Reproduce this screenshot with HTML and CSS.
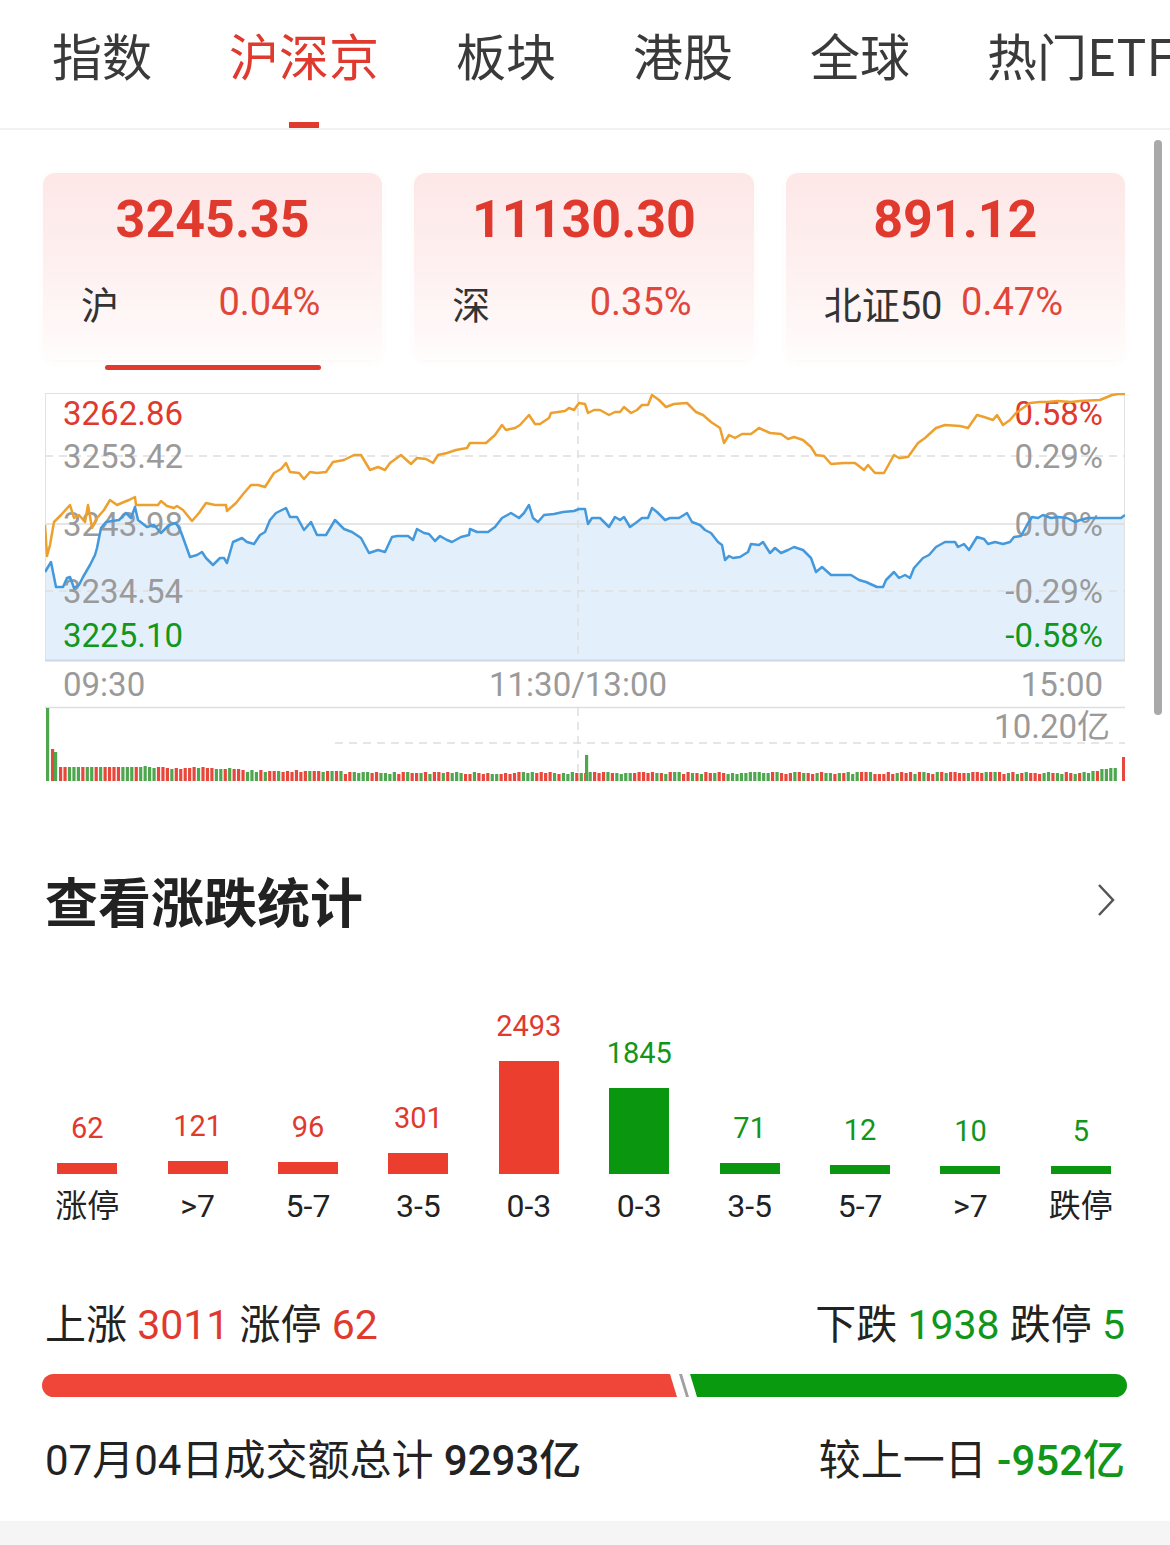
FILE: index.html
```html
<!DOCTYPE html>
<html>
  <head>
    <meta charset="utf-8">
    <title>行情</title>
    <link rel="stylesheet" href="styles.css">
  </head>
  <body>
    <nav class="tabs">
      <span class="tab">指数</span>
      <span class="tab active">沪深京</span>
      <span class="tab">板块</span>
      <span class="tab">港股</span>
      <span class="tab">全球</span>
      <span class="tab">热门ETF</span>
    </nav>

    <section class="market">
      <div class="quotes">
        <div class="quote">
          <div class="card">
            <div class="price">3245.35</div>
            <div class="row"><span class="name">沪</span><span class="pct">0.04%</span></div>
          </div>
          <div class="mark"></div>
        </div>
        <div class="quote">
          <div class="card">
            <div class="price">11130.30</div>
            <div class="row"><span class="name">深</span><span class="pct">0.35%</span></div>
          </div>
        </div>
        <div class="quote">
          <div class="card">
            <div class="price">891.12</div>
            <div class="row"><span class="name">北证50</span><span class="pct">0.47%</span></div>
          </div>
        </div>
      </div>

      <svg class="chart" width="1080" height="389" viewBox="45 393 1080 389">
        <polygon class="area" points="45,572 51,562 56,587 63,587 67,578 70,577 74,588 79,585 83,577 90,565 95,555 97,548 101,528 106,522 119,520 126,513 131,518 135,507 138,520 147,527 154,525 161,533 169,525 176,523 181,532 190,557 197,555 202,552 206,558 213,565 220,558 224,558 227,563 233,542 242,538 247,542 254,544 260,535 265,532 270,520 276,513 286,508 290,517 297,517 304,530 311,522 317,535 326,535 335,520 344,529 352,532 361,538 369,553 378,550 385,552 392,537 397,536 408,536 413,540 417,529 424,533 429,534 435,541 440,536 447,540 452,542 461,537 469,535 470,529 477,532 488,532 495,527 502,518 511,513 519,518 524,513 529,505 533,518 538,522 544,515 554,514 563,512 574,511 579,509 585,509 588,524 592,518 600,518 609,527 615,517 620,520 624,517 630,527 637,522 642,518 648,518 652,508 657,512 665,520 670,518 679,518 687,513 692,522 700,525 705,530 711,533 718,542 722,545 725,560 729,556 733,558 740,557 748,552 751,544 759,545 763,542 770,553 775,548 781,553 788,550 794,547 803,550 811,558 816,572 822,567 831,575 851,575 859,580 866,582 877,587 883,587 886,580 894,572 899,578 905,575 910,578 914,568 923,558 929,555 936,547 945,542 955,542 958,547 964,544 969,550 977,537 984,539 988,544 995,542 1003,544 1010,542 1014,537 1021,536 1027,525 1032,517 1038,518 1043,515 1051,518 1058,517 1067,518 1075,522 1080,520 1088,518 1110,518 1121,518 1125,515 1125,661 45,661"/>
        <rect class="frame" x="45.5" y="393.5" width="1079" height="267"/>
        <line class="grid dash" x1="45" y1="456" x2="1125" y2="456"/>
        <line class="grid" x1="45" y1="524" x2="1125" y2="524"/>
        <line class="grid dash" x1="45" y1="591" x2="1125" y2="591"/>
        <line class="grid dash" x1="578" y1="394" x2="578" y2="660"/>
        <line class="base" x1="45" y1="660.5" x2="1125" y2="660.5"/>

        <text class="ax up" x="63" y="413">3262.86</text>
        <text class="ax" x="63" y="456">3253.42</text>
        <text class="ax" x="63" y="524">3243.98</text>
        <text class="ax" x="63" y="591">3234.54</text>
        <text class="ax down" x="63" y="635">3225.10</text>
        <text class="ax up end" x="1103" y="413">0.58%</text>
        <text class="ax end" x="1103" y="456">0.29%</text>
        <text class="ax end" x="1103" y="524">0.00%</text>
        <text class="ax end" x="1103" y="591">-0.29%</text>
        <text class="ax down end" x="1103" y="635">-0.58%</text>

        <polyline class="line-sh" points="45,525 47,556 50,545 54,522 61,515 70,505 74,518 79,515 85,522 88,505 92,528 97,518 104,510 110,500 117,505 124,502 129,500 135,497 136,505 158,505 161,501 167,506 174,508 177,506 183,510 192,521 199,513 206,503 215,505 226,505 227,511 236,503 244,493 251,485 258,485 265,487 274,473 281,469 286,463 290,472 299,473 304,479 310,472 317,473 326,472 333,462 344,460 354,455 361,455 370,470 378,467 385,470 390,463 401,455 411,464 417,458 426,459 433,463 438,455 447,453 456,450 467,448 470,443 486,443 495,435 502,425 506,430 515,428 520,425 529,415 535,424 540,424 549,418 551,413 565,411 569,408 574,410 579,403 585,404 588,413 594,410 600,410 609,415 615,412 620,412 624,407 631,413 637,410 642,405 648,405 652,395 659,400 666,407 674,404 687,403 696,412 703,415 711,422 720,428 724,443 729,435 735,438 742,434 751,434 759,428 770,433 781,434 788,439 794,437 803,440 811,447 816,455 824,456 831,464 844,463 855,463 864,470 868,465 875,473 884,473 894,455 899,458 908,457 918,443 925,438 936,428 945,425 960,426 968,428 977,415 984,417 993,420 997,415 1003,425 1010,420 1016,413 1030,403 1040,402 1047,402 1058,401 1071,402 1080,401 1100,400 1112,395 1119,394 1125,394"/>
        <polyline class="line-idx" points="45,572 51,562 56,587 63,587 67,578 70,577 74,588 79,585 83,577 90,565 95,555 97,548 101,528 106,522 119,520 126,513 131,518 135,507 138,520 147,527 154,525 161,533 169,525 176,523 181,532 190,557 197,555 202,552 206,558 213,565 220,558 224,558 227,563 233,542 242,538 247,542 254,544 260,535 265,532 270,520 276,513 286,508 290,517 297,517 304,530 311,522 317,535 326,535 335,520 344,529 352,532 361,538 369,553 378,550 385,552 392,537 397,536 408,536 413,540 417,529 424,533 429,534 435,541 440,536 447,540 452,542 461,537 469,535 470,529 477,532 488,532 495,527 502,518 511,513 519,518 524,513 529,505 533,518 538,522 544,515 554,514 563,512 574,511 579,509 585,509 588,524 592,518 600,518 609,527 615,517 620,520 624,517 630,527 637,522 642,518 648,518 652,508 657,512 665,520 670,518 679,518 687,513 692,522 700,525 705,530 711,533 718,542 722,545 725,560 729,556 733,558 740,557 748,552 751,544 759,545 763,542 770,553 775,548 781,553 788,550 794,547 803,550 811,558 816,572 822,567 831,575 851,575 859,580 866,582 877,587 883,587 886,580 894,572 899,578 905,575 910,578 914,568 923,558 929,555 936,547 945,542 955,542 958,547 964,544 969,550 977,537 984,539 988,544 995,542 1003,544 1010,542 1014,537 1021,536 1027,525 1032,517 1038,518 1043,515 1051,518 1058,517 1067,518 1075,522 1080,520 1088,518 1110,518 1121,518 1125,515"/>

        <text class="ax" x="63" y="684">09:30</text>
        <text class="ax mid" x="578" y="684">11:30/13:00</text>
        <text class="ax end" x="1103" y="684">15:00</text>

        <line class="grid" x1="45" y1="707.5" x2="1125" y2="707.5"/>
        <line class="grid dash" x1="335" y1="743" x2="1125" y2="743"/>
        <line class="grid dash" x1="578" y1="708" x2="578" y2="780"/>
        <text class="ax end" x="1110" y="726">10.20亿</text>
        <g id="vol"></g>
      </svg>

      <div class="stats-head">
        <h2>查看涨跌统计</h2>
        <svg class="chev" width="18" height="34" viewBox="0 0 18 34"><polyline points="2,2 16,17 2,32"/></svg>
      </div>

      <div class="dist">
        <div class="col up"><span class="num">62</span><span class="bar" style="height:11px"></span><span class="cat">涨停</span></div>
        <div class="col up"><span class="num">121</span><span class="bar" style="height:13px"></span><span class="cat">&gt;7</span></div>
        <div class="col up"><span class="num">96</span><span class="bar" style="height:12px"></span><span class="cat">5-7</span></div>
        <div class="col up"><span class="num">301</span><span class="bar" style="height:21px"></span><span class="cat">3-5</span></div>
        <div class="col up"><span class="num">2493</span><span class="bar" style="height:113px"></span><span class="cat">0-3</span></div>
        <div class="col down"><span class="num">1845</span><span class="bar" style="height:86px"></span><span class="cat">0-3</span></div>
        <div class="col down"><span class="num">71</span><span class="bar" style="height:11px"></span><span class="cat">3-5</span></div>
        <div class="col down"><span class="num">12</span><span class="bar" style="height:9px"></span><span class="cat">5-7</span></div>
        <div class="col down"><span class="num">10</span><span class="bar" style="height:8px"></span><span class="cat">&gt;7</span></div>
        <div class="col down"><span class="num">5</span><span class="bar" style="height:8px"></span><span class="cat">跌停</span></div>
      </div>

      <div class="totals">
        <span>上涨 <span class="red">3011</span> 涨停 <span class="red">62</span></span>
        <span>下跌 <span class="green">1938</span> 跌停 <span class="green">5</span></span>
      </div>

      <svg class="ratio" width="1085" height="23" viewBox="0 0 1085 23">
        <path class="r-up" d="M11.5,0 H628 L635,23 H11.5 A11.5,11.5 0 0 1 11.5,0 Z"/>
        <polygon class="r-gap" points="637,0 640,0 647,23 644,23"/>
        <path class="r-down" d="M648,0 H1073.5 A11.5,11.5 0 0 1 1073.5,23 H655 Z"/>
      </svg>

      <div class="turnover">
        <span>07月04日成交额总计 <span class="strong">9293亿</span></span>
        <span>较上一日 <span class="strong green">-952亿</span></span>
      </div>
    </section>

    <div class="footer"></div>
    <div class="scrollbar"></div>

    <script src="volume.js"></script>
  </body>
</html>
```

FILE: styles.css
```css
* {
  box-sizing: border-box;
}
body {
  margin: 0;
  position: relative;
  background: #fff;
  color: #222;
  font-family: Roboto, "Noto Sans CJK SC", sans-serif;
}
.tabs {
  display: flex;
  gap: 77px;
  height: 130px;
  padding-left: 52px;
  border-bottom: 2px solid #f1f1f1;
  overflow: hidden;
  white-space: nowrap;
}
.tab {
  position: relative;
  flex-shrink: 0;
  padding-top: 29px;
  font-family: "Noto Sans CJK SC", sans-serif;
  font-size: 50px;
  line-height: 50px;
  color: #3a3a3a;
}
.tab.active {
  color: #e0392e;
}
.tab.active::after {
  content: "";
  position: absolute;
  bottom: 0;
  left: 50%;
  width: 30px;
  height: 6px;
  margin-left: -15px;
  background: #e0392e;
}
.market {
  padding: 43px 45px 0 43px;
}
.quotes {
  display: grid;
  grid-template-columns: repeat(3, 1fr);
  gap: 32px;
}
.card {
  height: 187px;
  padding-top: 17px;
  border-radius: 12px;
  background: linear-gradient(180deg, #fde7e7 0%, #fef0f0 50%, #fff8f8 85%, #fffdfd 100%);
  box-shadow: 0 2px 6px rgba(230, 120, 120, 0.06);
}
.price {
  text-align: center;
  font-size: 52px;
  font-weight: 700;
  line-height: 60px;
  color: #e0392e;
}
.row {
  display: flex;
  justify-content: space-between;
  align-items: center;
  height: 50px;
  margin-top: 27px;
  padding: 0 62px 0 38px;
  font-size: 38px;
}
.name {
  color: #333;
}
.pct {
  color: #e0463a;
}
.mark {
  width: 216px;
  height: 5px;
  margin: 5px auto 0;
  border-radius: 3px;
  background: #e0392e;
}
.chart {
  display: block;
  margin: 23px 0 0 2px;
}
.frame {
  fill: none;
  stroke: #e2e2e2;
  stroke-width: 1;
}
.area {
  fill: #e3f0fb;
}
.grid {
  stroke: #dedede;
  stroke-width: 1.5;
}
.grid.dash {
  stroke-dasharray: 8 6;
}
.base {
  stroke: #cbd9e6;
  stroke-width: 2;
}
.ax {
  font-family: Roboto, "Noto Sans CJK SC", sans-serif;
  font-size: 33px;
  fill: #9a9a9a;
  dominant-baseline: central;
}
.ax.up {
  fill: #e0392e;
}
.ax.down {
  fill: #12961c;
}
.ax.end {
  text-anchor: end;
}
.ax.mid {
  text-anchor: middle;
}
.line-sh,
.line-idx {
  fill: none;
  stroke-width: 2.5;
  stroke-linejoin: round;
}
.line-sh {
  stroke: #eea02e;
}
.line-idx {
  stroke: #4498dc;
}
.vup {
  fill: #e8483c;
}
.vdown {
  fill: #4ea64e;
}
.stats-head {
  display: flex;
  justify-content: space-between;
  align-items: center;
  height: 56px;
  margin-top: 90px;
  padding: 0 10px 0 2px;
}
.stats-head h2 {
  margin: 0;
  font-family: "Noto Sans CJK SC", sans-serif;
  font-size: 53px;
  font-weight: 700;
  line-height: 56px;
  color: #222;
}
.chev polyline {
  fill: none;
  stroke: #555;
  stroke-width: 2.5;
}
.dist {
  display: flex;
  align-items: flex-end;
  margin: 83px -11px 0 -11px;
}
.col {
  flex: 1;
  display: flex;
  flex-direction: column;
  align-items: center;
}
.num {
  font-size: 29px;
  line-height: 30px;
  margin-bottom: 20px;
}
.up .num {
  color: #e0392e;
}
.down .num {
  color: #11961a;
}
.bar {
  width: 60px;
}
.up .bar {
  background: #ec3e2f;
}
.down .bar {
  background: #0a960e;
}
.cat {
  margin-top: 12px;
  font-size: 32px;
  line-height: 40px;
  color: #222;
}
.totals,
.turnover {
  display: flex;
  justify-content: space-between;
  padding-left: 2px;
  line-height: 48px;
  color: #222;
}
.totals {
  margin-top: 75px;
  font-size: 41px;
}
.turnover {
  margin-top: 40px;
  font-size: 42px;
}
.red {
  color: #e0392e;
}
.green {
  color: #11961a;
}
.strong {
  font-weight: 500;
}
.ratio {
  display: block;
  margin: 25px 0 0 -1px;
}
.r-up {
  fill: #f0463a;
}
.r-gap {
  fill: #a0a0a0;
}
.r-down {
  fill: #0a9a10;
}
.footer {
  height: 25px;
  margin-top: 36px;
  background: #f5f5f5;
}
.scrollbar {
  position: absolute;
  top: 140px;
  left: 1154px;
  width: 8px;
  height: 575px;
  border-radius: 4px;
  background: #a9a9a9;
}
```

FILE: volume.js
```js
// volume bars under the intraday chart
(function () {
  var g = document.getElementById('vol');
  var ns = 'http://www.w3.org/2000/svg';
  var seed = 11;

  function rnd() {
    seed = (seed * 9301 + 49297) % 233280;
    return seed / 233280;
  }

  function bar(x, h, up) {
    var r = document.createElementNS(ns, 'rect');
    r.setAttribute('x', x);
    r.setAttribute('y', 781 - h);
    r.setAttribute('width', 3.2);
    r.setAttribute('height', h);
    r.setAttribute('class', up ? 'vup' : 'vdown');
    g.appendChild(r);
  }

  bar(46, 73, false);
  bar(51, 32, true);
  bar(54, 29, false);

  for (var x = 59; x < 1118; x += 4.45) {
    var h;
    if (x < 140) h = 14;
    else if (x < 245) h = 13 - (x - 140) / 50 + rnd() * 2;
    else if (x < 340) h = 9 + rnd() * 2;
    else h = 7 + rnd() * 2.5;
    if (x > 1090) h = 8 + (x - 1090) / 5 + rnd() * 2;
    bar(x, Math.round(h), rnd() > 0.5);
  }

  bar(585, 26, false);
  bar(1122, 24, true);
})();
```
